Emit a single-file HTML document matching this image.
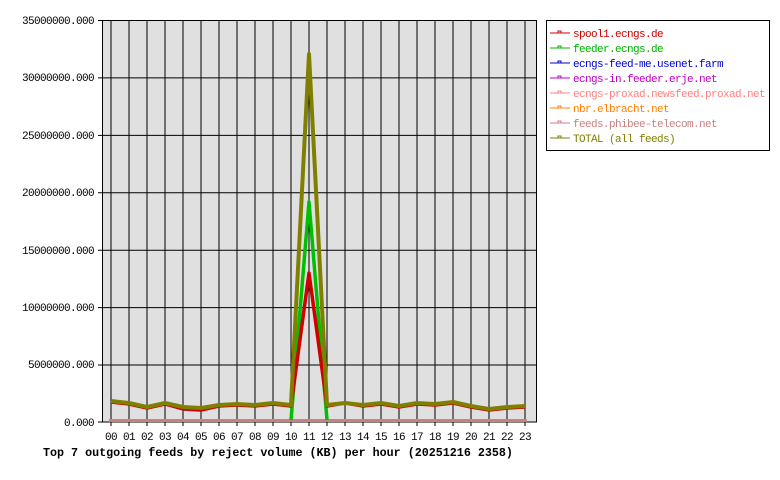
<!DOCTYPE html>
<html><head><meta charset="utf-8"><style>
body{margin:0;background:#fff;width:780px;height:480px;overflow:hidden}
svg{display:block}
text{font-family:"Liberation Mono",monospace;font-size:11px;letter-spacing:-0.6px}
</style></head><body>
<svg width="780" height="480" xmlns="http://www.w3.org/2000/svg">
<rect x="102" y="20" width="434.5" height="402" fill="#e0e0e0"/>
<g stroke="#000" stroke-width="1">
<path d="M111 20V426M129 20V426M147 20V426M165 20V426M183 20V426M201 20V426M219 20V426M237 20V426M255 20V426M273 20V426M291 20V426M309 20V426M327 20V426M345 20V426M363 20V426M381 20V426M399 20V426M417 20V426M435 20V426M453 20V426M471 20V426M489 20V426M507 20V426M525 20V426"/>
<path d="M98 20.5H536M98 77.9H536M98 135.4H536M98 192.8H536M98 250.2H536M98 307.6H536M98 365H536M98 422H536"/>
<rect x="102.5" y="20.5" width="434" height="401.5" fill="none"/>
</g>
<g fill="#000" text-anchor="end">
<text x="94" y="24">35000000.000</text><text x="94" y="81">30000000.000</text><text x="94" y="139">25000000.000</text><text x="94" y="196">20000000.000</text><text x="94" y="254">15000000.000</text><text x="94" y="311">10000000.000</text><text x="94" y="368">5000000.000</text><text x="94" y="426">0.000</text>
</g>
<g fill="#000" text-anchor="middle">
<text x="111" y="440">00</text><text x="129" y="440">01</text><text x="147" y="440">02</text><text x="165" y="440">03</text><text x="183" y="440">04</text><text x="201" y="440">05</text><text x="219" y="440">06</text><text x="237" y="440">07</text><text x="255" y="440">08</text><text x="273" y="440">09</text><text x="291" y="440">10</text><text x="309" y="440">11</text><text x="327" y="440">12</text><text x="345" y="440">13</text><text x="363" y="440">14</text><text x="381" y="440">15</text><text x="399" y="440">16</text><text x="417" y="440">17</text><text x="435" y="440">18</text><text x="453" y="440">19</text><text x="471" y="440">20</text><text x="489" y="440">21</text><text x="507" y="440">22</text><text x="525" y="440">23</text>
</g>
<line x1="109" y1="420.5" x2="527" y2="420.5" stroke="#c88080" stroke-width="3"/>
<g fill="none" stroke-width="3.5" stroke-linejoin="round">
<polyline stroke="#00c000" points="291,420 309,202 327,420"/>
<polyline stroke="#d00000" points="111,402 129,404 147,408 165,404 183,409 201,410 219,406 237,405 255,406 273,404 291,406 309,273 327,406 345,403 363,406 381,404 399,407 417,404 435,405 453,403 471,407 489,410 507,408 525,407"/>
<polyline stroke="#808000" stroke-width="4" points="111,401 129,403 147,407 165,403 183,407 201,408 219,405 237,404 255,405 273,403 291,405 309,54 327,405 345,403 363,405 381,403 399,406 417,403 435,404 453,402 471,406 489,409 507,407 525,406"/>
</g>
<rect x="546.5" y="20.5" width="223" height="130" fill="#fff" stroke="#000"/>
<g stroke-width="1">
<line x1="550" y1="33" x2="570" y2="33" stroke="#d00000"/><rect x="558" y="31" width="3" height="2" fill="none" stroke="#d00000"/>
<line x1="550" y1="48" x2="570" y2="48" stroke="#00b000"/><rect x="558" y="46" width="3" height="2" fill="none" stroke="#00b000"/>
<line x1="550" y1="63" x2="570" y2="63" stroke="#0000d0"/><rect x="558" y="61" width="3" height="2" fill="none" stroke="#0000d0"/>
<line x1="550" y1="78" x2="570" y2="78" stroke="#c000c0"/><rect x="558" y="76" width="3" height="2" fill="none" stroke="#c000c0"/>
<line x1="550" y1="93" x2="570" y2="93" stroke="#ff8080"/><rect x="558" y="91" width="3" height="2" fill="none" stroke="#ff8080"/>
<line x1="550" y1="108" x2="570" y2="108" stroke="#ff8000"/><rect x="558" y="106" width="3" height="2" fill="none" stroke="#ff8000"/>
<line x1="550" y1="123" x2="570" y2="123" stroke="#c88080"/><rect x="558" y="121" width="3" height="2" fill="none" stroke="#c88080"/>
<line x1="550" y1="138" x2="570" y2="138" stroke="#808000"/><rect x="558" y="136" width="3" height="2" fill="none" stroke="#808000"/>
</g>
<text x="573" y="37" fill="#d00000">spool1.ecngs.de</text>
<text x="573" y="52" fill="#00b000">feeder.ecngs.de</text>
<text x="573" y="67" fill="#0000d0">ecngs-feed-me.usenet.farm</text>
<text x="573" y="82" fill="#c000c0">ecngs-in.feeder.erje.net</text>
<text x="573" y="97" fill="#ff8080">ecngs-proxad.newsfeed.proxad.net</text>
<text x="573" y="112" fill="#ff8000">nbr.elbracht.net</text>
<text x="573" y="127" fill="#c88080">feeds.phibee-telecom.net</text>
<text x="573" y="142" fill="#808000">TOTAL (all feeds)</text>
<text x="43" y="456" fill="#000" style="font-size:11.7px;font-weight:bold;letter-spacing:0">Top 7 outgoing feeds by reject volume (KB) per hour (20251216 2358)</text>
</svg>
</body></html>
